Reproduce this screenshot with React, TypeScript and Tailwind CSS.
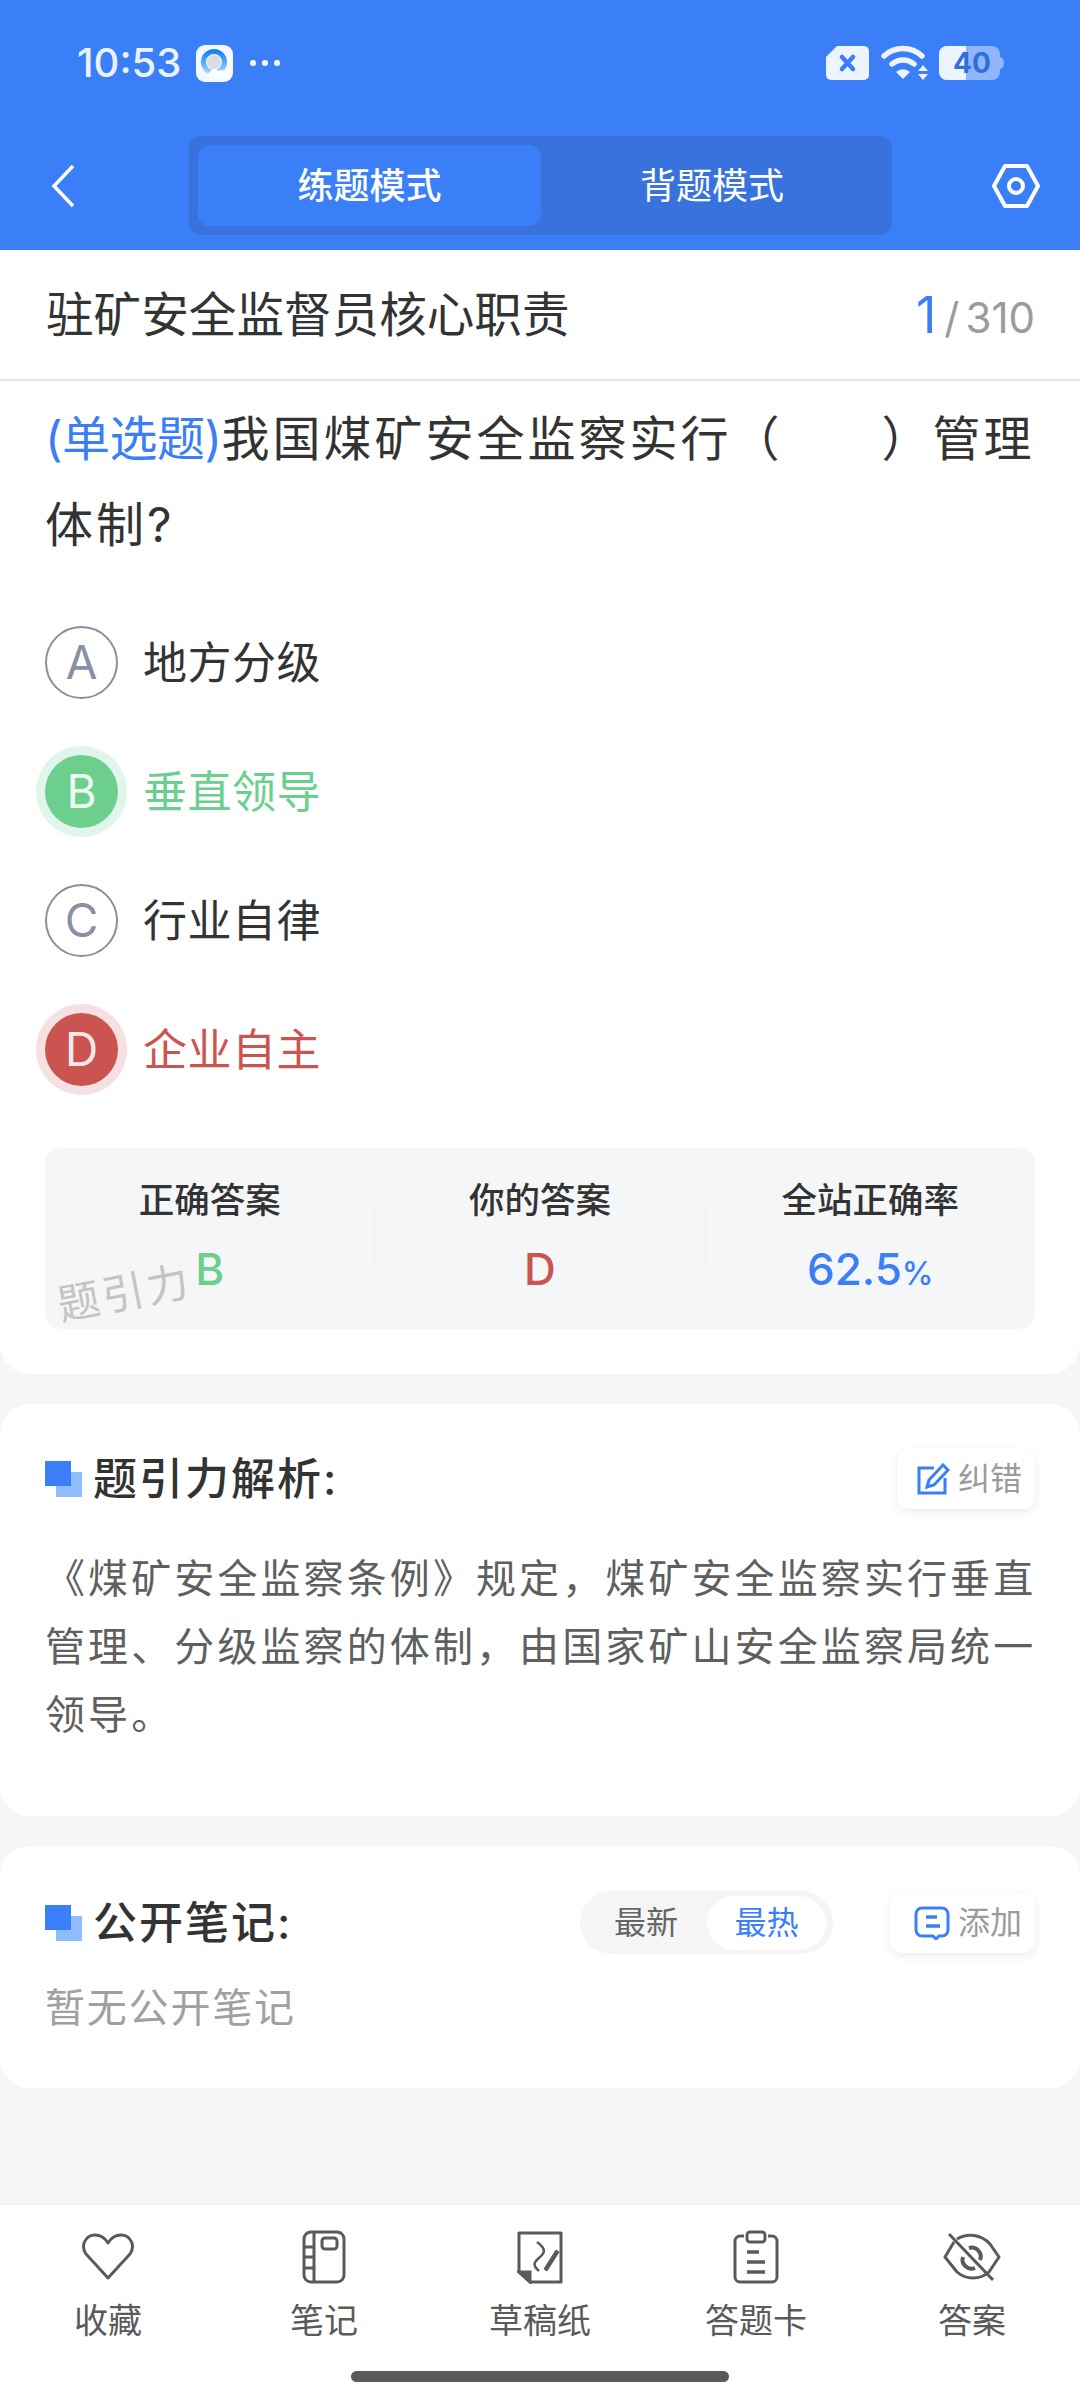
import { ReactNode } from "react";

const ink = "#5a5a5a";

function SectionMark() {
  return (
    <div className="relative w-[37px] h-[36px] shrink-0">
      <div className="absolute left-[11px] top-[11px] w-[26px] h-[25px] bg-[#8fbdfb]"></div>
      <div className="absolute left-0 top-0 w-[26px] h-[25px] bg-[#3b7ff8]"></div>
    </div>
  );
}

function StatusBar() {
  return (
    <div className="h-[126px] pl-[77px] pr-[76px] flex items-center text-[#eaf2ff]">
      <span className="text-[40px] font-medium leading-none w-[119px]">10:53</span>
      <svg width="37" height="37" viewBox="0 0 37 37">
        <defs>
          <linearGradient id="qb" x1="0" y1="0" x2="0" y2="1">
            <stop offset="0" stopColor="#1484ee" />
            <stop offset="1" stopColor="#9fd2fa" />
          </linearGradient>
        </defs>
        <rect width="37" height="37" rx="9" fill="#f4f8ff" />
        <circle cx="18" cy="17" r="10.5" fill="none" stroke="url(#qb)" strokeWidth="5" />
        <circle cx="18" cy="17" r="7" fill="#d9dde3" />
        <path d="M15 32c-3 0-4-4-1-5 1-3 6-4 8-1 3-2 7-1 8 2 3 0 3 4 0 4z" fill="#fff" />
      </svg>
      <div className="ml-[17px] flex gap-[6px]">
        <span className="w-[6px] h-[6px] rounded-full bg-white"></span>
        <span className="w-[6px] h-[6px] rounded-full bg-white"></span>
        <span className="w-[6px] h-[6px] rounded-full bg-white"></span>
      </div>
      <div className="ml-auto flex items-center">
        <svg width="43" height="34" viewBox="0 0 43 34">
          <path d="M11 0h27a5 5 0 0 1 5 5v24a5 5 0 0 1-5 5H5a5 5 0 0 1-5-5V11z" fill="#eef4ff" />
          <path d="M16 11l11 12M27 11L16 23" stroke="#3b7ff8" strokeWidth="4.5" strokeLinecap="round" />
        </svg>
        <svg className="ml-[12px]" width="48" height="36" viewBox="0 0 48 36">
          <path d="M3 11a28 28 0 0 1 38 0" fill="none" stroke="#eef4ff" strokeWidth="5.5" strokeLinecap="round" />
          <path d="M11 19a17 17 0 0 1 22 0" fill="none" stroke="#eef4ff" strokeWidth="5.5" strokeLinecap="round" />
          <path d="M15 27a10 10 0 0 1 14 0l-7 7z" fill="#eef4ff" />
          <path d="M42 20l5 6H37zM42 35l5-6H37z" fill="#eef4ff" />
        </svg>
        <div className="relative ml-[10px] w-[65px] h-[34px] text-[#2f6fdc]">
          <svg className="absolute inset-0" width="65" height="34" viewBox="0 0 65 34">
            <path d="M8 0h45a8 8 0 0 1 8 8v18a8 8 0 0 1-8 8H8a8 8 0 0 1-8-8V8a8 8 0 0 1 8-8z" fill="#8fb5fb" />
            <path d="M61 11a4 6 0 0 1 0 12z" fill="#8fb5fb" />
            <path d="M8 0h19v34H8a8 8 0 0 1-8-8V8a8 8 0 0 1 8-8z" fill="#eef4ff" />
          </svg>
          <span className="absolute left-[14px] top-0 text-[28px] leading-[34px] font-bold">40</span>
        </div>
      </div>
    </div>
  );
}

function Header() {
  return (
    <div className="bg-[#3b7ff8] h-[250px]">
      <StatusBar />
      <div className="mt-[10px] h-[99px] flex items-center">
        <div className="w-[189px] pl-[51px] shrink-0">
          <svg width="24" height="44" viewBox="0 0 24 44" className="block">
            <path d="M22 2L3 22l19 20" fill="none" stroke="#fff" strokeWidth="3.5" />
          </svg>
        </div>
        <div className="w-[703px] h-[99px] rounded-[12px] bg-[#3872dc] p-[9px] flex text-[36px] text-white font-medium">
          <div className="w-[343px] rounded-[12px] bg-[#3b7ff8] flex items-center justify-center">练题模式</div>
          <div className="flex-1 flex items-center justify-center font-normal">背题模式</div>
        </div>
        <svg className="ml-[100px]" width="48" height="46" viewBox="0 0 48 46">
          <path d="M13 3h22l11 20-11 20H13L2 23z" fill="none" stroke="#fff" strokeWidth="4" strokeLinejoin="round" />
          <circle cx="24" cy="23" r="7" fill="none" stroke="#fff" strokeWidth="4" />
        </svg>
      </div>
    </div>
  );
}

const options = [
  { key: "A", text: "地方分级", state: "" },
  { key: "B", text: "垂直领导", state: "right" },
  { key: "C", text: "行业自律", state: "" },
  { key: "D", text: "企业自主", state: "wrong" },
];

function Option({ k, text, state }: { k: string; text: string; state: string }) {
  const circle =
    state === "right"
      ? "bg-[#6dcf8e] text-[#eefaf2] shadow-[0_0_0_9px_#e2f5ea]"
      : state === "wrong"
        ? "bg-[#cb5450] text-[#f9e8e8] shadow-[0_0_0_9px_#f5e1e1]"
        : "border-2 border-[#8a8fa3] text-[#8a8fa3]";
  const label = state === "right" ? "text-[#6dcf8e]" : state === "wrong" ? "text-[#cb5450]" : "text-[#333333]";
  return (
    <div className="h-[129px] flex items-center">
      <div className={`w-[73px] h-[73px] rounded-full flex items-center justify-center text-[46px] ${circle}`}>{k}</div>
      <span className={`ml-[25px] text-[44px] leading-none tracking-[0.5px] ${label}`}>{text}</span>
    </div>
  );
}

function Stat({ label, children, mark }: { label: string; children: ReactNode; mark?: boolean }) {
  return (
    <div className="flex-1 flex flex-col items-center pt-[33px] relative">
      <span className="text-[35.5px] leading-[40px] font-medium text-[#333333]">{label}</span>
      <div className="mt-[27px] leading-[42px] text-[44px] font-medium">{children}</div>
      {mark && (
        <span className="absolute left-[12px] top-[124px] text-[42px] leading-none tracking-[3px] text-[#c4c4c4] rotate-[-11deg]">
          题引力
        </span>
      )}
    </div>
  );
}

function QuestionCard() {
  return (
    <div className="bg-white rounded-b-[30px] px-[45px] pb-[45px]">
      <div className="pt-[15px] mr-[-8px] text-[48px] leading-[86px] text-[#333333] tracking-[3px]">
        <span className="text-[#3b7ff8] tracking-[-0.5px]">(单选题)</span>
        我国煤矿安全监察实行（<span className="inline-block w-[99px]"></span>）管理体制?
      </div>
      <div className="mt-[30px]">
        {options.map((o) => (
          <Option key={o.key} k={o.key} text={o.text} state={o.state} />
        ))}
      </div>
      <div className="mt-[34px] h-[181px] rounded-[16px] bg-[#f5f6f8] flex">
        <Stat label="正确答案" mark>
          <span className="text-[#6dcf8e]">B</span>
        </Stat>
        <div className="w-px h-[59px] mt-[60px] bg-[#e9eaed]"></div>
        <Stat label="你的答案">
          <span className="text-[#cb5450]">D</span>
        </Stat>
        <div className="w-px h-[59px] mt-[60px] bg-[#e9eaed]"></div>
        <Stat label="全站正确率">
          <span className="text-[#3b7ff8]">
            62.5<span className="text-[32px]">%</span>
          </span>
        </Stat>
      </div>
    </div>
  );
}

function ChipButton({ icon, text, width }: { icon: ReactNode; text: string; width: string }) {
  return (
    <div className={`${width} h-[60px] rounded-[12px] bg-white shadow-[0_3px_10px_rgba(0,0,0,0.08)] flex items-center justify-end pr-[13px] gap-[8px]`}>
      {icon}
      <span className="text-[32px] leading-none text-[#9b9b9b]">{text}</span>
    </div>
  );
}

function AnalysisCard() {
  return (
    <div className="mt-[30px] bg-white rounded-[30px] pl-[45px] pr-[40px] pt-[45px] pb-[67px]">
      <div className="h-[60px] flex items-center pr-[5px]">
        <SectionMark />
        <span className="ml-[11px] text-[44px] leading-none font-medium text-[#333333] tracking-[2px]">题引力解析:</span>
        <div className="ml-auto">
          <ChipButton
            width="w-[138px]"
            text="纠错"
            icon={
              <svg width="33" height="32" viewBox="0 0 33 32">
                <path d="M17 5H2v25h26V15" fill="none" stroke="#3b7ff8" strokeWidth="3" />
                <path d="M26 2l5 5-14 15-7 2 2-7z" fill="none" stroke="#3b7ff8" strokeWidth="3" />
              </svg>
            }
          />
        </div>
      </div>
      <div className="mt-[36px] text-[40px] leading-[68px] tracking-[3.1px] text-[#5f5f5f]">
        《煤矿安全监察条例》规定，煤矿安全监察实行垂直管理、分级监察的体制，由国家矿山安全监察局统一领导。
      </div>
    </div>
  );
}

function NotesCard() {
  return (
    <div className="mt-[30px] bg-white rounded-[30px] px-[45px] pt-[45px] pb-[50px]">
      <div className="h-[63px] flex items-center">
        <SectionMark />
        <span className="ml-[11px] text-[44px] leading-none font-medium text-[#333333] tracking-[2px]">公开笔记:</span>
        <div className="ml-auto w-[253px] h-[63px] rounded-full bg-[#f5f5f5] flex items-center pl-[34px] pr-[7px] text-[32px]">
          <span className="text-[#666666]">最新</span>
          <span className="ml-auto w-[119px] h-[54px] rounded-full bg-white flex items-center justify-center text-[#3b7ff8]">最热</span>
        </div>
        <div className="ml-[57px]">
          <ChipButton
            width="w-[145px]"
            text="添加"
            icon={
              <svg width="36" height="34" viewBox="0 0 36 34">
                <path d="M8 2h20a6 6 0 0 1 6 6v16a6 6 0 0 1-6 6h-3l-3 3-3-3H8a6 6 0 0 1-6-6V8a6 6 0 0 1 6-6z" fill="none" stroke="#3b7ff8" strokeWidth="3" />
                <path d="M12 11h11M12 20h14" stroke="#3b7ff8" strokeWidth="3.5" />
              </svg>
            }
          />
        </div>
      </div>
      <div className="mt-[24px] text-[40px] leading-[60px] text-[#a0a0a0] tracking-[1.8px]">暂无公开笔记</div>
    </div>
  );
}

const navItems: { label: string; icon: ReactNode }[] = [
  {
    label: "收藏",
    icon: (
      <svg width="54" height="48" viewBox="0 0 54 48" fill="none" stroke={ink} strokeWidth="3">
        <path d="M27 45L5 21C-1 12 5 2 14 2c6 0 10 3 13 8 3-5 7-8 13-8 9 0 15 10 9 19z" strokeLinejoin="round" />
      </svg>
    ),
  },
  {
    label: "笔记",
    icon: (
      <svg width="44" height="54" viewBox="0 0 44 54" fill="none" stroke={ink} strokeWidth="3">
        <rect x="2" y="2" width="40" height="50" rx="7" />
        <path d="M12 2v50M2 17h10M2 27h10M2 38h10" />
        <rect x="20" y="8" width="15" height="11" rx="3" />
      </svg>
    ),
  },
  {
    label: "草稿纸",
    icon: (
      <svg width="46" height="54" viewBox="0 0 46 54" fill="none" stroke={ink} strokeWidth="3">
        <path d="M2 42V3h42v49H13z" strokeLinejoin="round" />
        <path d="M2 42h11v10z" fill={ink} />
        <path d="M20 12c8 6 9 10 3 15-6 5-8 8-1 14" strokeWidth="2.5" />
        <path d="M27 39l12-19 3 2-12 19z" fill={ink} strokeWidth="1" />
      </svg>
    ),
  },
  {
    label: "答题卡",
    icon: (
      <svg width="46" height="54" viewBox="0 0 46 54" fill="none" stroke={ink} strokeWidth="3">
        <path d="M11 6H7a5 5 0 0 0-5 5v36a5 5 0 0 0 5 5h32a5 5 0 0 0 5-5V11a5 5 0 0 0-5-5h-4" />
        <rect x="14" y="2" width="18" height="10" rx="3" />
        <path d="M14 22h12M14 32h18M14 42h18" strokeWidth="3.5" />
      </svg>
    ),
  },
  {
    label: "答案",
    icon: (
      <svg width="58" height="48" viewBox="0 0 58 48" fill="none" stroke={ink} strokeWidth="3">
        <path d="M11 9L2 24l12 15c9 8 23 8 32 0l10-15-9-13C38 1 24 0 14 6" strokeLinejoin="round" />
        <path d="M20 24a9 9 0 0 0 12 11M37 27a9 9 0 0 0-11-12" strokeWidth="4" />
        <path d="M6 1l44 46" />
      </svg>
    ),
  },
];

function BottomBar() {
  return (
    <div className="mt-auto h-[196px] bg-white border-t border-[#eeeeee]">
      <div className="flex pt-[25px]">
        {navItems.map((item) => (
          <div key={item.label} className="flex-1 flex flex-col items-center">
            <div className="h-[54px] flex items-center justify-center">{item.icon}</div>
            <span className="mt-[17px] text-[34px] leading-[40px] text-[#5a5a5a]">{item.label}</span>
          </div>
        ))}
      </div>
      <div className="mt-[30px] mx-auto w-[378px] h-[11px] rounded-full bg-[#5a5a5a]"></div>
    </div>
  );
}

export default function App() {
  return (
    <div className="w-[1080px] h-[2400px] flex flex-col bg-[#f5f6f8] font-['Inter','Noto_Sans_CJK_SC',sans-serif] overflow-hidden">
      <Header />
      <div className="bg-white h-[131px] border-b-2 border-[#e2e2e2] pl-[46px] pr-[45px] flex items-center">
        <span className="text-[47.6px] leading-none text-[#333333]">驻矿安全监督员核心职责</span>
        <div className="ml-auto flex items-baseline text-[#9b9b9b] text-[42px] leading-none">
          <span className="text-[50px] text-[#3b7ff8]">1</span>
          <span className="ml-[8px]">/</span>
          <span className="ml-[6px]">310</span>
        </div>
      </div>
      <QuestionCard />
      <AnalysisCard />
      <NotesCard />
      <BottomBar />
    </div>
  );
}
